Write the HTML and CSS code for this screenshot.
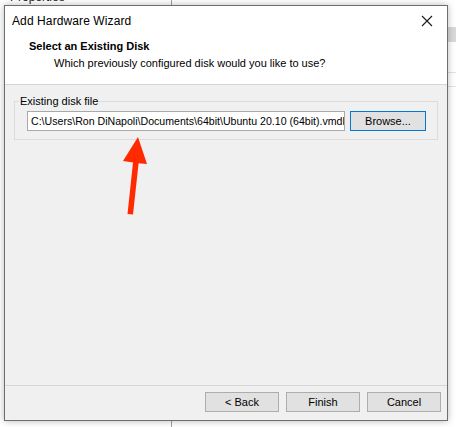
FILE: index.html
```html
<!DOCTYPE html>
<html>
<head>
<meta charset="utf-8">
<link rel="stylesheet" href="styles.css">
</head>
<body>
<div class="desk">
  <div class="bg-app">
    <div class="bg-top"><span class="bg-label">Properties</span><span class="bg-col"></span></div>
    <div class="bg-side">
      <div class="bg-band"></div>
      <div class="bg-line l1"></div>
      <div class="bg-line l2"></div>
    </div>
  </div>

  <div class="dialog">
    <div class="head">
      <div class="titlebar">
        <span class="title">Add Hardware Wizard</span>
        <svg class="close" width="12" height="12" viewBox="0 0 12 12"><path d="M1 1 L11 11 M11 1 L1 11" stroke="#1a1a1a" stroke-width="1.1" fill="none"/></svg>
      </div>
      <div class="heading">
        <div class="h-title">Select an Existing Disk</div>
        <div class="h-sub">Which previously configured disk would you like to use?</div>
      </div>
    </div>
    <div class="body">
      <fieldset class="group">
        <legend class="legend">Existing disk file</legend>
        <div class="row">
          <div class="input">C:\Users\Ron DiNapoli\Documents\64bit\Ubuntu 20.10 (64bit).vmdk</div>
          <button class="btn btn-focus">Browse...</button>
        </div>
      </fieldset>
    </div>
    <div class="footer">
      <button class="btn">&lt; Back</button>
      <button class="btn">Finish</button>
      <button class="btn">Cancel</button>
    </div>
  </div>

  <svg class="arrow" width="60" height="100" viewBox="0 0 60 100">
    <path d="M28 0 L13 24 L23 25.5 L17.5 77 L23 77.5 L28.6 26.2 L37 27 Z" fill="#ff2a00"/>
  </svg>
</div>
</body>
</html>
```

FILE: styles.css
```css
* { box-sizing: border-box; }
html, body { margin: 0; padding: 0; }
body {
  width: 456px;
  height: 427px;
  overflow: hidden;
  background: #ffffff;
  font-family: "Liberation Sans", Arial, sans-serif;
  color: #000;
}
.desk {
  position: relative;
  width: 456px;
  height: 427px;
  overflow: hidden;
}
.bg-app {
  position: absolute;
  inset: 0;
}
.bg-top {
  position: relative;
  height: 427px;
}
.bg-label {
  position: absolute;
  left: 10px;
  top: -10px;
  font-size: 12px;
  line-height: 14px;
  color: #222;
}
.bg-col {
  position: absolute;
  left: 171px;
  top: 0;
  bottom: 0;
  width: 1px;
  background: #a0a0a0;
}
.bg-side {
  position: absolute;
  left: 448px;
  right: 0;
  top: 0;
  bottom: 0;
}
.bg-band {
  position: absolute;
  left: 0; right: 0;
  top: 27px;
  height: 15px;
  background: #d9d9d9;
}
.bg-line {
  position: absolute;
  left: 0; right: 0;
  height: 1px;
  background: #e3e3e3;
}
.l1 { top: 72px; }
.l2 { top: 86px; }

.dialog {
  position: absolute;
  left: 4px;
  top: 5px;
  width: 444px;
  height: 416px;
  border: 1px solid #6e6e6e;
  background: #f0f0f0;
  display: flex;
  flex-direction: column;
  box-shadow: 0 0 7px rgba(0,0,0,0.28);
}
.head {
  background: #ffffff;
  height: 79px;
  border-bottom: 1px solid #d5d5d5;
}
.titlebar {
  height: 29px;
  display: flex;
  align-items: center;
  justify-content: space-between;
  padding: 0 14px 0 7px;
}
.title {
  font-size: 12px;
  letter-spacing: 0.1px;
  color: #000;
  padding-top: 1px;
}
.close { display: block; }
.heading {
  padding: 4px 0 0 24px;
}
.h-title {
  font-weight: bold;
  font-size: 11px;
  line-height: 15px;
}
.h-sub {
  font-size: 11px;
  line-height: 15px;
  margin-top: 2px;
  padding-left: 25px;
}
.body {
  flex: 1;
  padding: 15px 9px 0 9px;
}
.group {
  margin: 0;
  padding: 5px 11px 11px 12px;
  border: 1px solid #dcdcdc;
  height: 46px;
  position: relative;
  top: -6px;
}
.legend {
  font-size: 11px;
  padding: 0 1px;
  margin-left: -8px;
  line-height: 14px;
}
.row {
  display: flex;
  gap: 5px;
  margin-top: -2px;
}
.input {
  width: 318px;
  height: 20px;
  background: #fff;
  border: 1px solid #a9a9a9;
  font-size: 10.6px;
  line-height: 18px;
  padding-left: 3px;
  white-space: nowrap;
  overflow: hidden;
}
.btn {
  width: 74px;
  height: 20px;
  background: #e1e1e1;
  border: 1px solid #adadad;
  font-family: "Liberation Sans", Arial, sans-serif;
  font-size: 11px;
  color: #000;
  padding: 0;
  margin: 0;
}
.btn-focus {
  width: 76px;
  border: 1px solid #0078d7;
  box-shadow: inset 0 0 0 1px #e1e1e1;
}
.footer {
  height: 35px;
  border-top: 1px solid #d5d5d5;
  display: flex;
  justify-content: flex-end;
  gap: 7px;
  padding: 6px 6px 0 0;
}
.arrow {
  position: absolute;
  left: 110px;
  top: 137px;
}
```
